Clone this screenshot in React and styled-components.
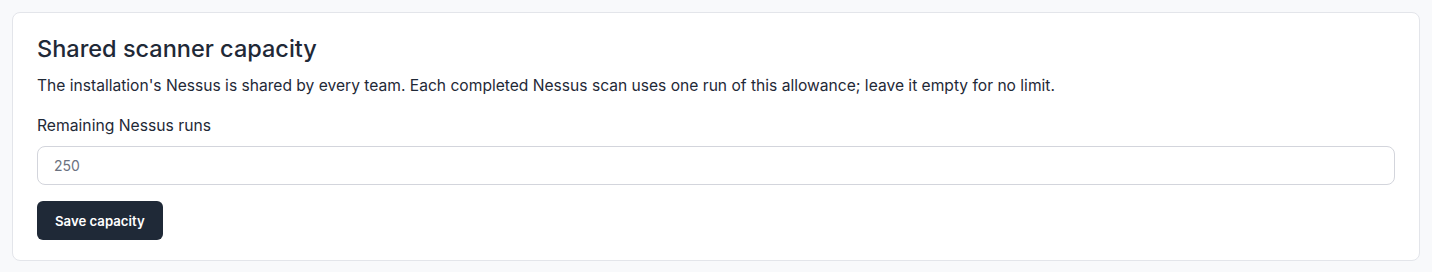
import React from "react";
import styled, { createGlobalStyle } from "styled-components";

const Global = createGlobalStyle`
  html, body { margin: 0; padding: 0; background: #f8f9fb; }
  body { font-family: Inter, "Noto Sans", sans-serif; color: #1f2937; }
  * { box-sizing: border-box; }
`;

const Page = styled.div`
  padding: 12px;
`;

const Card = styled.section`
  background: #ffffff;
  border: 1px solid #e3e5ea;
  border-radius: 8px;
  padding: 21px 24px 20px;
  display: flex;
  flex-direction: column;
`;

const Title = styled.h2`
  margin: 0;
  font-size: 23.5px;
  line-height: 30px;
  font-weight: 500;
  color: #1f2937;
`;

const Description = styled.p`
  margin: 10px 0 0;
  font-size: 15.6px;
  line-height: 24px;
  color: #1f2937;
`;

const Field = styled.label`
  display: flex;
  flex-direction: column;
  gap: 9px;
  margin-top: 17px;
`;

const LabelText = styled.span`
  font-size: 15.7px;
  line-height: 22px;
  color: #1f2937;
`;

const Input = styled.input`
  height: 39px;
  border: 1px solid #d3d5dc;
  border-radius: 8px;
  padding: 0 16px;
  font: inherit;
  font-size: 14px;
  color: #1f2937;
  outline: none;
  &::placeholder { color: #6b7280; }
`;

const Button = styled.button`
  align-self: flex-start;
  margin-top: 16px;
  height: 39px;
  padding: 0 18px;
  border: none;
  border-radius: 6px;
  background: #1f2937;
  color: #ffffff;
  font-family: Inter, sans-serif;
  font-size: 13.2px;
  font-weight: 600;
  cursor: pointer;
`;

export default function App() {
  return (
    <>
      <Global />
      <Page>
        <Card>
          <Title>Shared scanner capacity</Title>
          <Description>
            The installation's Nessus is shared by every team. Each completed Nessus scan uses one run of this allowance; leave it empty for no limit.
          </Description>
          <Field>
            <LabelText>Remaining Nessus runs</LabelText>
            <Input placeholder="250" />
          </Field>
          <Button>Save capacity</Button>
        </Card>
      </Page>
    </>
  );
}
